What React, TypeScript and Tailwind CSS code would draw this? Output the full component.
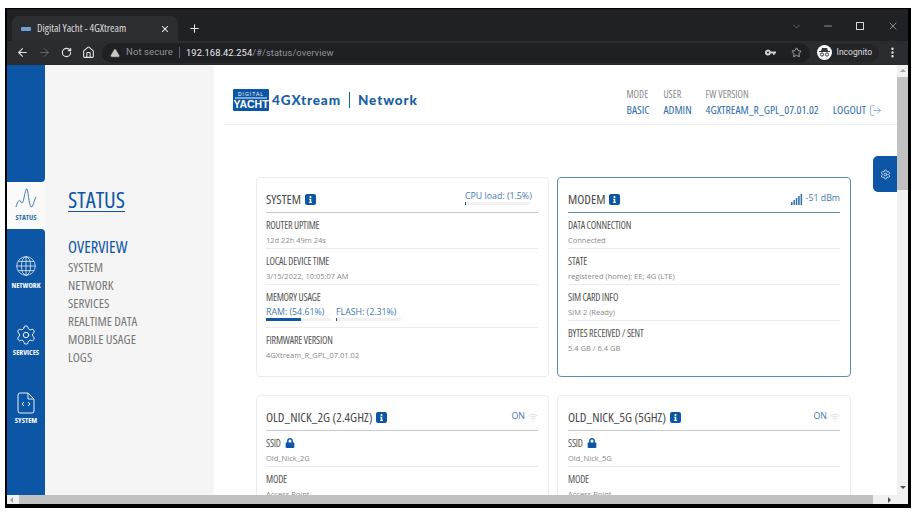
import {FC, ReactNode} from 'react';
import {
  ArrowLeft,
  ArrowRight,
  ChevronDown,
  EllipsisVertical,
  Home,
  LogOut,
  Minus,
  Plus,
  RotateCw,
  Settings,
  Star,
  TriangleAlert,
  Wifi,
  X,
} from 'lucide-react';
import {FaInfo, FaLock} from 'react-icons/fa';

const narrow = "font-['Open_Sans',sans-serif] [font-stretch:75%]";
const open = "font-['Open_Sans',sans-serif]";
const roboto = "font-['Roboto',sans-serif]";

const InfoBadge: FC = () => (
  <span className="ml-[4px] inline-flex h-[11px] w-[11px] items-center justify-center rounded-[2px] bg-[#0d56a6] text-white">
    <FaInfo size={7} />
  </span>
);

const Field: FC<{label: ReactNode; value?: string; last?: boolean; children?: ReactNode}> = ({label, value, last, children}) => (
  <div className={`pt-[4px] ${last ? '' : 'border-b border-[#ebebeb]'} ${children ? 'h-[43px]' : 'h-[36px]'}`}>
    <div className={`${narrow} text-[10px] font-medium leading-[16px] tracking-[-0.2px] text-[#555]`}>{label}</div>
    {value && <div className={`${open} mt-[1px] text-[7.5px] leading-[12px] text-[#888]`}>{value}</div>}
    {children}
  </div>
);

const Meter: FC<{label: string; pct: number; width: number}> = ({label, pct, width}) => (
  <div style={{width}}>
    <div className={`${open} whitespace-nowrap text-[8.8px] leading-[11px] text-[#3f79b0]`}>{label}</div>
    <div className="h-[3px] w-full rounded-[2px] bg-[#f1f1f1]">
      <div className="h-full bg-[#0d56a6]" style={{width: `${pct}%`}} />
    </div>
  </div>
);

const Card: FC<{title: string; right: ReactNode; active?: boolean; second?: boolean; children: ReactNode}> = ({title, right, active, second, children}) => (
  <div className={`h-[200px] rounded-[4px] border bg-white pr-[10px] pt-[8px] ${second ? 'pl-[10px]' : 'pl-[9px]'} ${active ? 'border-[#5c8db8]' : 'border-[#ececec]'}`}>
    <div className={`flex h-[27px] items-center justify-between border-b ${active ? 'border-[#5c8db8]' : 'border-[#c9c9c9]'}`}>
      <div className="flex items-center">
        <span className={`${narrow} text-[13px] leading-[20px] text-[#4a4a4a]`}>{title}</span>
        <InfoBadge />
      </div>
      {right}
    </div>
    {children}
  </div>
);

const NavItem: FC<{icon: ReactNode; label: string}> = ({icon, label}) => (
  <div className="flex h-[68px] flex-col items-center">
    {icon}
    <span className={`${narrow} text-[7.5px] font-bold leading-[12px] text-white`}>{label}</span>
  </div>
);

const HeaderCol: FC<{top: string; bottom: string}> = ({top, bottom}) => (
  <div>
    <div className={`${narrow} text-[10px] leading-[14px] text-[#8a8a8a]`}>{top}</div>
    <div className={`${narrow} mt-[1px] text-[11.5px] leading-[16px] text-[#2f6ea8]`}>{bottom}</div>
  </div>
);

const SignalBars: FC = () => (
  <svg width="13" height="11" viewBox="0 0 13 11" fill="#2f6ea8">
    <rect x="0" y="8" width="1.5" height="3" />
    <rect x="2.4" y="6" width="1.5" height="5" />
    <rect x="4.8" y="4" width="1.5" height="7" />
    <rect x="7.2" y="2" width="1.5" height="9" />
    <rect x="9.6" y="0" width="1.5" height="11" />
  </svg>
);

const GlobeIcon: FC = () => (
  <svg width="20" height="20" viewBox="0 0 20 20" fill="none" stroke="white" strokeWidth="0.7" className="mb-[3px]">
    <circle cx="10" cy="10" r="9.3" />
    <ellipse cx="10" cy="10" rx="4.6" ry="9.3" />
    <path d="M10 .7v18.6M.7 10h18.6M2 5.400h16M2 14.600h16" />
  </svg>
);

const KeyIcon: FC = () => (
  <svg width="11" height="7" viewBox="0 0 11 7" fill="#d0d0d0">
    <path d="M3 .5a3 3 0 0 1 2.800 2H11v2H9.500V6H8V4.500H5.800A3 3 0 1 1 3 .5zM3 2.500a1 1 0 1 0 0 2 1 1 0 0 0 0-2z" />
  </svg>
);

const OnLabel: FC = () => (
  <span className={`${open} flex items-center gap-[3px] text-[8.8px] text-[#3f79b0]`}>
    ON <Wifi size={10} strokeWidth={1} className="text-[#9fb4c8]" />
  </span>
);

const SsidLabel: FC = () => (
  <span className="flex items-center gap-[4px]">
    SSID <FaLock size={10} className="text-[#0d56a6]" />
  </span>
);

const App: FC = () => {
  return (
    <div className="h-[513px] w-[913px] overflow-hidden bg-white pb-[5px] pl-[5px] pr-[2px] pt-[8px]">
      <div className="flex h-full flex-col overflow-hidden border-b-[4px] border-l-[2px] border-r-[3px] border-t-[1px] border-black">
        {/* tab strip */}
        <div className="flex h-[32px] items-end bg-[#202124] pl-[5px]">
          <div className="flex h-[25px] w-[166px] items-center rounded-t-[7px] bg-[#2d2e31] pl-[9px] pr-[8px] text-[#d8d8d8]">
            <span className="h-[4px] w-[10px] rounded-[1px] bg-[#6fa0d8]" />
            <span className={`${narrow} ml-[6px] flex-1 text-[10.8px] text-[#dcdcdc]`}>Digital Yacht - 4GXtream</span>
            <X size={10} strokeWidth={2.5} className="text-white" />
          </div>
          <div className="mb-[6px] ml-[10px] text-[#e6e6e6]">
            <Plus size={13} strokeWidth={2} />
          </div>
          <div className="mb-[9px] ml-auto flex items-center text-[#d8d8d8]">
            <ChevronDown size={11} strokeWidth={1} className="text-[#aaa]" />
            <Minus size={12} strokeWidth={1.2} className="ml-[20px]" />
            <span className="ml-[22px] h-[8px] w-[8px] border border-[#d8d8d8]" />
            <X size={12} strokeWidth={1.2} className="ml-[23px] mr-[9px]" />
          </div>
        </div>
        {/* toolbar */}
        <div className="flex h-[24px] items-center border-b border-[#2a2b2e] bg-[#2b2c2f] pl-[9px] pr-[9px] text-[#e4e4e4]">
          <ArrowLeft size={13} strokeWidth={2} />
          <ArrowRight size={13} strokeWidth={1.5} className="ml-[9px] text-[#70757a]" />
          <RotateCw size={11} strokeWidth={2.5} className="ml-[10px]" />
          <Home size={13} strokeWidth={2} className="ml-[10px]" />
          <div className="ml-[7px] flex h-[20px] flex-1 items-center rounded-full bg-[#1f2023] pl-[8px] pr-[8px]">
            <TriangleAlert size={10} fill="#c8c8c8" strokeWidth={1} className="text-[#c8c8c8]" />
            <span className={`${roboto} ml-[6px] text-[9.5px] tracking-[0.1px] text-[#8f949a]`}>Not secure</span>
            <span className="ml-[6px] mr-[6px] h-[11px] w-px bg-[#5f6368]" />
            <span className={`${roboto} text-[9.3px] tracking-[0.1px] text-[#e8eaed]`}>192.168.42.254</span>
            <span className={`${roboto} text-[9.3px] tracking-[0.1px] text-[#8f949a]`}>/#/status/overview</span>
            <span className="ml-auto"><KeyIcon /></span>
            <Star size={11} strokeWidth={1.5} className="ml-[15px] text-[#ddd]" />
          </div>
          <div className="ml-[7px] flex h-[18px] items-center rounded-full bg-[#242528] pr-[7px]">
            <span className="flex h-[15px] w-[15px] items-center justify-center rounded-full bg-white">
              <svg width="11" height="9" viewBox="0 0 11 9" fill="#35363a">
                <path d="M3 0h5l1 3H2z" />
                <rect x="0" y="3" width="11" height="1" />
                <circle cx="3" cy="6.500" r="1.600" fill="none" stroke="#35363a" />
                <circle cx="8" cy="6.500" r="1.600" fill="none" stroke="#35363a" />
              </svg>
            </span>
            <span className={`${roboto} ml-[5px] text-[8.5px] text-[#dedede]`}>Incognito</span>
          </div>
          <EllipsisVertical size={13} strokeWidth={2.5} className="ml-[7px]" />
        </div>

        {/* page */}
        <div className="flex min-h-0 flex-1">
          <div className="flex min-w-0 flex-1 flex-col">
            <div className="relative flex min-h-0 flex-1 overflow-hidden">
              {/* icon rail */}
              <div className="flex w-[38px] shrink-0 flex-col bg-[#fafafa]">
                <div className="h-[117px] rounded-br-[4px] bg-[#0d56a6]" />
                <div className="flex h-[47px] flex-col items-center pt-[5px]">
                  <svg width="22" height="24" viewBox="0 0 22 24" fill="none" stroke="#2f6ea8" strokeWidth="0.9">
                    <path d="M1 20 C3 13 5 12 6 15 C7 17 8 16 9 11 C10 6 11 1 12 2 C13 3 14 18 16 20 C18 21 19 13 21 10" />
                  </svg>
                  <span className={`${narrow} mt-[1px] text-[7.5px] font-bold leading-[10px] text-[#2f6ea8]`}>STATUS</span>
                </div>
                <div className="flex-1 rounded-tr-[4px] bg-[#0d56a6] pt-[27px]">
                  <NavItem icon={<GlobeIcon />} label="NETWORK" />
                  <NavItem icon={<Settings size={22} strokeWidth={1} className="text-white" />} label="SERVICES" />
                  <NavItem
                    icon={
                      <svg width="18" height="22" viewBox="0 0 18 22" fill="none" stroke="white" strokeWidth="0.9">
                        <path d="M3 1h8l6 6v12a2 2 0 0 1-2 2H3a2 2 0 0 1-2-2V3a2 2 0 0 1 2-2z" />
                        <path d="M11 1v6h6" />
                        <path d="M7 10l-2 2 2 2M11 10l2 2-2 2" />
                      </svg>
                    }
                    label="SYSTEM"
                  />
                </div>
              </div>

              {/* section menu */}
              <div className="w-[169px] shrink-0 bg-[#f5f5f5] pl-[23px] pt-[121px]">
                <div className={`${narrow} text-[22.5px] font-medium leading-[28px] text-[#0d56a6] underline decoration-1 underline-offset-[3px]`}>STATUS</div>
                <div className={`${narrow} mt-[22px] text-[16.5px] font-medium leading-[22px] text-[#0d56a6]`}>OVERVIEW</div>
                <div className={`${narrow} text-[13px] leading-[18px] text-[#777]`}>
                  <div>SYSTEM</div>
                  <div>NETWORK</div>
                  <div>SERVICES</div>
                  <div>REALTIME DATA</div>
                  <div>MOBILE USAGE</div>
                  <div>LOGS</div>
                </div>
              </div>

              {/* main */}
              <div className="min-w-0 flex-1 bg-white pl-[10px]">
                <div className="flex h-[60px] items-end border-b border-[#ececec] pb-[6px] pl-[9px]">
                  <div className="mb-[7px] flex h-[22px] w-[36px] flex-col items-center justify-center rounded-[1px] bg-[#0d56a6] text-white">
                    <span className="font-['Liberation_Sans',sans-serif] text-[5px] leading-[6px] tracking-[1px]">DIGITAL</span>
                    <span className="h-[2px] w-[32px] border-y border-[#7fa8d4]" />
                    <span className="font-['Liberation_Sans',sans-serif] text-[10.5px] font-bold leading-[10px]">YACHT</span>
                  </div>
                  <div className="mb-[7px] ml-[3px] flex h-[22px] items-center font-['Lato',sans-serif] text-[13.5px] font-black tracking-[0.9px] text-[#1a5fa5]">
                    <span>4GXtream</span>
                    <span className="mx-[8px] h-[16px] w-[1px] bg-[#1a5fa5]" />
                    <span>Network</span>
                  </div>
                  <div className="ml-auto flex items-end pr-[15px]">
                    <HeaderCol top="MODE" bottom="BASIC" />
                    <div className="ml-[14px]"><HeaderCol top="USER" bottom="ADMIN" /></div>
                    <div className="ml-[14px]"><HeaderCol top="FW VERSION" bottom="4GXTREAM_R_GPL_07.01.02" /></div>
                    <div className={`${narrow} ml-[14px] flex h-[16px] items-center text-[11.5px] text-[#2f6ea8]`}>
                      LOGOUT <LogOut size={13} strokeWidth={1.2} className="ml-[3px] text-[#5a90c0]" />
                    </div>
                  </div>
                </div>

                <div className="ml-[32px] grid w-[595px] grid-cols-[293px_294px] gap-x-[8px] gap-y-[18px] pt-[52px]">
                  <Card
                    title="SYSTEM"
                    right={
                      <div className="mr-[8px] mt-[5px] w-[65px] self-start">
                        <Meter label="CPU load: (1.5%)" pct={2} width={65} />
                      </div>
                    }
                  >
                    <Field label="ROUTER UPTIME" value="12d 22h 49m 24s" />
                    <Field label="LOCAL DEVICE TIME" value="3/15/2022, 10:05:07 AM" />
                    <Field label="MEMORY USAGE">
                      <div className="mt-[2px] flex gap-[5px]">
                        <Meter label="RAM: (54.61%)" pct={54.6} width={65} />
                        <Meter label="FLASH: (2.31%)" pct={2.3} width={65} />
                      </div>
                    </Field>
                    <Field label="FIRMWARE VERSION" value="4GXtream_R_GPL_07.01.02" last />
                  </Card>
                  <Card
                    title="MODEM"
                    active
                    second
                    right={
                      <span className={`${open} flex items-center gap-[2px] text-[8.8px] text-[#3f79b0]`}>
                        <SignalBars /> -51 dBm
                      </span>
                    }
                  >
                    <Field label="DATA CONNECTION" value="Connected" />
                    <Field label="STATE" value="registered (home); EE; 4G (LTE)" />
                    <Field label="SIM CARD INFO" value="SIM 2 (Ready)" />
                    <Field label="BYTES RECEIVED / SENT" value="5.4 GB / 6.4 GB" last />
                  </Card>
                  <Card title="OLD_NICK_2G (2.4GHZ)" right={<OnLabel />}>
                    <Field label={<SsidLabel />} value="Old_Nick_2G" />
                    <Field label="MODE" value="Access Point" last />
                  </Card>
                  <Card title="OLD_NICK_5G (5GHZ)" second right={<OnLabel />}>
                    <Field label={<SsidLabel />} value="Old_Nick_5G" />
                    <Field label="MODE" value="Access Point" last />
                  </Card>
                </div>
              </div>

              <div className="absolute right-0 top-[91px] flex h-[36px] w-[24px] items-center justify-center rounded-l-[5px] bg-[#0d56a6] text-white">
                <Settings size={11} strokeWidth={1.5} />
              </div>
            </div>

            {/* horizontal scrollbar */}
            <div className="flex h-[9px] shrink-0 items-center bg-[#f1f1f1]">
              <span className="ml-[3px] h-0 w-0 border-y-[3px] border-r-[3px] border-y-transparent border-r-[#a3a3a3]" />
              <div className="ml-[6px] h-full w-[854px] bg-[#c1c1c1]" />
              <span className="ml-auto mr-[6px] h-0 w-0 border-y-[3px] border-l-[3px] border-y-transparent border-l-[#505050]" />
            </div>
          </div>

          {/* vertical scrollbar */}
          <div className="flex w-[11px] shrink-0 flex-col items-center bg-[#f1f1f1]">
            <span className="mt-[4px] h-0 w-0 border-x-[3px] border-b-[3px] border-x-transparent border-b-[#a3a3a3]" />
            <div className="mt-[5px] h-[113px] w-full bg-[#c1c1c1]" />
            <span className="mb-[15px] mt-auto h-0 w-0 border-x-[3px] border-t-[3px] border-x-transparent border-t-[#505050]" />
          </div>
        </div>
      </div>
    </div>
  );
};

export default App;
